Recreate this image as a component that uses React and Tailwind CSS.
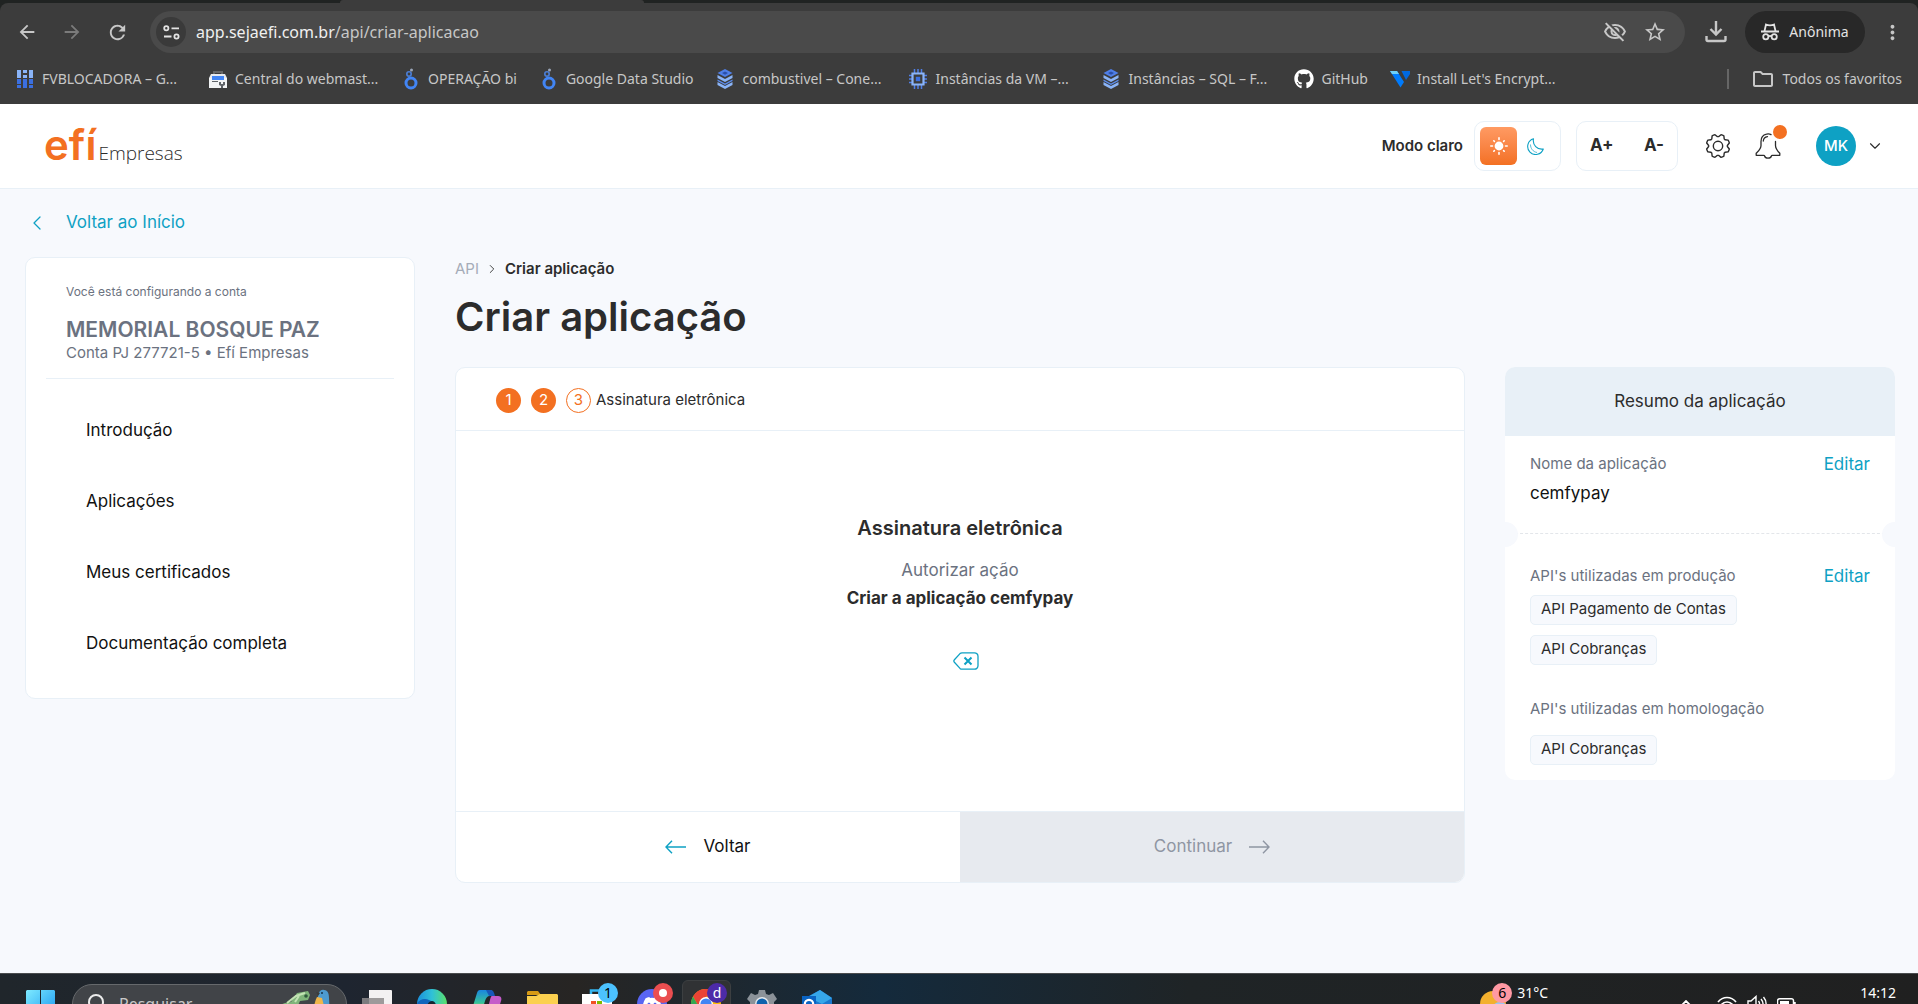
import { useState } from "react";
import {
  MdArrowBack,
  MdArrowForward,
  MdRefresh,
  MdStarBorder,
  MdMoreVert,
  MdOutlineFolder,
  MdOutlineVisibilityOff,
} from "react-icons/md";
import { FaGithub, FaDiscord } from "react-icons/fa";
import { PiGearLight } from "react-icons/pi";
import { ChevronDown, ChevronLeft, ChevronRight } from "lucide-react";

/* ---------- Bookmark icons ---------- */

const CloudIcon = () => (
  <svg width="16" height="20" viewBox="0 0 16 20">
    <path fill="#8ab4f8" d="M0 1h4v8H0zM6 1h4v3H6zM12 1h4v8h-4zM6 6h4v3H6z" />
    <path fill="#3b6fe0" d="M0 10h4v5H0zM0 16h4v3H0zM6 10h4v9H6zM12 10h4v5h-4zM12 16h4v3h-4z" />
  </svg>
);

const WebmasterIcon = () => (
  <svg width="18" height="18" viewBox="0 0 18 18">
    <path d="M5 4V2h8v2" fill="none" stroke="#666" strokeWidth="2" />
    <path d="M2 4h14l2 4H0z" fill="#e8eaed" />
    <path d="M3 6h12v4H3z" fill="#4285f4" />
    <path d="M0 8h3v2h12V8h3v10H0z" fill="#f1f3f4" />
    <path d="M3 11h6v1H3zM10 12h2v2h2v-2h2v3l-2 1v2h-2v-2l-2-1z" fill="#5f6368" />
  </svg>
);

const LookerIcon = () => (
  <svg width="14" height="22" viewBox="0 0 14 22">
    <circle cx="7" cy="15" r="5" fill="none" stroke="#4285f4" strokeWidth="3" />
    <circle cx="5" cy="6" r="2.2" fill="none" stroke="#4b7fd8" strokeWidth="1.6" />
    <circle cx="7.500" cy="2" r="1.500" fill="#9aa5b8" />
  </svg>
);

const SqlIcon = () => (
  <svg width="16" height="20" viewBox="0 0 16 20">
    <path d="M8 0l7.500 4L8 8 .5 4z" fill="#4f7fe8" />
    <path d="M8 2.500l3 1.500-3 1.700L5 4z" fill="#2b4fa8" />
    <path d="M.5 6L8 10l7.500-4v3L8 13 .5 9z" fill="#8ab4f8" />
    <path d="M.5 10.500L8 14.500l7.500-4v1.500L8 16 .5 12z" fill="#5b8df0" />
    <path d="M.5 13L8 17l7.500-4v3L8 20 .5 16z" fill="#8ab4f8" />
  </svg>
);

const ChipIcon = () => (
  <svg width="18" height="20" viewBox="0 0 18 20" fill="none">
    <path d="M5.500 0v4M9 0v4M12.500 0v4M5.500 16v4M9 16v4M12.500 16v4M0 6.500h3M0 10h3M0 13.500h3M15 6.500h3M15 10h3M15 13.500h3" stroke="#4f7fe8" strokeWidth="1.500" />
    <path d="M3.500 4.500h11v11h-11z" stroke="#8ab4f8" strokeWidth="2.200" />
    <path d="M6.800 7.800h4.400v4.400H6.800z" fill="#3b6fe0" />
  </svg>
);

const VultrIcon = () => (
  <svg width="20" height="18" viewBox="0 0 20 18">
    <path d="M0 1h7l7 11-3.500 5.500z" fill="#007bfc" />
    <path d="M0 1h7l2 3H2z" fill="#6fd0f7" />
    <path d="M11.500 1H20v3l-4 6z" fill="#0069e0" />
  </svg>
);

const bookmarks = [
  { name: "FVBLOCADORA – G...", Icon: CloudIcon, wide: true },
  { name: "Central do webmast...", Icon: WebmasterIcon, wide: true },
  { name: "OPERAÇÃO bi", Icon: LookerIcon },
  { name: "Google Data Studio", Icon: LookerIcon },
  { name: "combustivel – Cone...", Icon: SqlIcon, wide: true },
  { name: "Instâncias da VM –...", Icon: ChipIcon, wide: true },
  { name: "Instâncias – SQL – F...", Icon: SqlIcon, wide: true },
  { name: "GitHub", Icon: () => <FaGithub size={20} color="#fff" /> },
  { name: "Install Let's Encrypt...", Icon: VultrIcon },
];

/* ---------- Browser ---------- */

function BrowserBar() {
  return (
    <div className="shrink-0 bg-[#202322] text-[#c7c7c7] font-['Noto_Sans',sans-serif]">
      <div className="flex h-[3px]">
        <div className="w-[340px]" />
        <div className="w-[304px] rounded-t-sm bg-[#3c3c3c]" />
      </div>
      <div className="rounded-t-lg bg-[#3c3c3c] pt-2">
        <div className="flex h-[42px] items-center pr-3.5">
          <button aria-label="Voltar página" className="ml-4"><MdArrowBack size={22} /></button>
          <button aria-label="Avançar página" className="ml-[23px] text-[#7b7b7b]"><MdArrowForward size={22} /></button>
          <button aria-label="Recarregar" className="ml-[23px]"><MdRefresh size={23} /></button>
          <div className="ml-[21px] flex h-full flex-1 items-center rounded-full bg-[#4a4a4a] pr-[18px] pl-1.5">
            <button aria-label="Informações do site" className="flex size-[30px] items-center justify-center rounded-full bg-[#3a3a3a] text-[#e3e3e3]">
              <svg width="17" height="15" viewBox="0 0 17 15" fill="none" stroke="currentColor" strokeWidth="1.800">
                <circle cx="3.300" cy="3.300" r="2.100" />
                <path d="M8.500 3.300H16M1 11.500h7.500" />
                <circle cx="13.500" cy="11.500" r="2.100" />
              </svg>
            </button>
            <p className="ml-2.5 flex-1">
              <span className="text-[#f0f0f0]">app.sejaefi.com.br</span>/api/criar-aplicacao
            </p>
            <button aria-label="Cookies bloqueados"><MdOutlineVisibilityOff size={24} /></button>
            <button aria-label="Favoritar" className="ml-4"><MdStarBorder size={24} /></button>
          </div>
          <button aria-label="Downloads" className="ml-5">
            <svg width="22" height="22" viewBox="0 0 22 22" fill="none" stroke="currentColor" strokeWidth="2.400">
              <path d="M11 0v13M5.500 8l5.500 5.500L16.500 8M1.500 15v3.500a1.500 1.500 0 0 0 1.500 1.500h16a1.500 1.500 0 0 0 1.500-1.500V15" />
            </svg>
          </button>
          <button className="ml-[18px] flex h-full w-[120px] items-center justify-center gap-2.5 rounded-full bg-[#282828] text-sm text-[#e3e3e3]">
            <svg width="18" height="18" viewBox="0 0 18 18" fill="none" stroke="currentColor" strokeWidth="1.800">
              <path d="M0 8.500h18M3.500 8L5 1.500c2 .8 6 .8 8 0L14.500 8" />
              <circle cx="4.800" cy="13.800" r="2.600" />
              <circle cx="13.200" cy="13.800" r="2.600" />
              <path d="M7.400 13.500c1-.7 2.200-.7 3.200 0" />
            </svg>
            Anônima
          </button>
          <button aria-label="Mais opções" className="ml-4"><MdMoreVert size={23} /></button>
        </div>

        <nav className="flex h-[51px] items-center gap-[22px] pr-4 pl-[15px] text-sm">
          {bookmarks.map(({ name, Icon, wide }) => (
            <a key={name} href="#" className={`flex shrink-0 items-center gap-[7px] whitespace-nowrap ${wide ? "w-[171px]" : ""}`}>
              <span className="flex w-5 justify-center"><Icon /></span>
              {name}
            </a>
          ))}
          <span className="ml-auto h-5 w-0.5 bg-[#666]" />
          <a href="#" className="flex items-center gap-2 whitespace-nowrap">
            <MdOutlineFolder size={24} />
            Todos os favoritos
          </a>
        </nav>
      </div>
    </div>
  );
}

/* ---------- Page ---------- */

function Header() {
  const [zoom, setZoom] = useState(0);

  return (
    <header className="flex h-[85px] shrink-0 items-center border-b border-[#e8f0f7] bg-white pr-[34px] pl-11 text-[#2c2c2c]">
      <a href="#" className="flex items-baseline gap-0.5">
        <span className="text-[42px] leading-none font-semibold text-[#f37021]">efí</span>
        <span className="font-['Open_Sans',sans-serif] text-[19px] font-light">Empresas</span>
      </a>

      <span className="ml-auto text-[15px] font-semibold">Modo claro</span>
      <div className="ml-[11px] flex h-[50px] w-[87px] items-center gap-2.5 rounded-[10px] border border-[#e8f0f7] px-[5px]">
        <button aria-label="Modo claro" className="flex h-[38px] w-[37px] items-center justify-center rounded-md bg-linear-to-b from-[#ff9a62] to-[#f37021]">
          <svg width="18" height="18" viewBox="0 0 18 18" stroke="#fff" strokeWidth="1.600" strokeLinecap="round">
            <circle cx="9" cy="9" r="3.600" fill="#fff" />
            <path d="M9 .8v1.700M9 15.500v1.700M.8 9h1.700M15.500 9h1.700M3.800 3.800l.6.600M13.600 13.600l.6.600M3.800 14.200l.6-.6M13.600 4.400l.6-.6" />
          </svg>
        </button>
        <button aria-label="Modo escuro">
          <svg width="17" height="17" viewBox="0 0 17 17" fill="none" stroke="#0ea1c4" strokeWidth="1.100" strokeLinejoin="round">
            <path d="M6.500.8A8 8 0 1 0 16.300 11 8.500 8.500 0 0 1 6.500.8z" />
            <path d="M3.500 6.500c0 4 2.500 7.300 6.500 8" strokeWidth=".7" />
          </svg>
        </button>
      </div>

      <div className="ml-[15px] flex h-[50px] w-[102px] items-center justify-between rounded-[10px] border border-[#e8f0f7] px-[13px] text-[17px] font-bold">
        <button onClick={() => setZoom(zoom + 1)}>A+</button>
        <button onClick={() => setZoom(zoom - 1)}>A-</button>
      </div>

      <button aria-label="Configurações" className="ml-[25px]"><PiGearLight size={30} /></button>
      <button aria-label="Notificações" className="relative ml-[22px]">
        <svg width="26" height="26" viewBox="0 0 26 26" fill="none" stroke="currentColor" strokeWidth="1.300" strokeLinecap="round" strokeLinejoin="round">
          <path d="M16 1.600C14.500.7 13 .7 11.500 1.200 8 2 6 5 6 8.500v4C6 16 3.500 18 1.200 20.300v2h7.600c.4 0 .7.300.8.700.4 1.500 1.500 2.200 3.400 2.200s3-.7 3.400-2.200c.1-.4.400-.7.800-.7h7.600v-2C22.500 18 20.500 16 20.500 12.500V8.500" />
          <path d="M8.300 8c.2-2.500 1.700-4 4.200-4.300" />
        </svg>
        <span className="absolute -top-2 -right-1.5 size-3.5 rounded-full bg-[#f37021]" />
      </button>

      <button className="ml-[35px] flex items-center gap-2.5">
        <span className="flex size-10 items-center justify-center rounded-full bg-[#0ea1c4] text-[15px] font-medium text-white">MK</span>
        <ChevronDown size={18} strokeWidth={1.5} />
      </button>
    </header>
  );
}

const menu = ["Introdução", "Aplicações", "Meus certificados", "Documentação completa"];

function Sidebar() {
  return (
    <aside className="w-[390px] shrink-0">
      <a href="#" className="flex h-[68px] items-center gap-[17px] text-[17px] text-[#0ea1c4]">
        <ChevronLeft size={24} strokeWidth={1.3} />
        Voltar ao Início
      </a>
      <div className="rounded-[10px] border border-[#e8f0f7] bg-white px-5 pb-[19px]">
        <div className="border-b border-[#e8f0f7] px-5 pt-6 pb-3.5 text-[#6b7280]">
          <p className="text-xs leading-5">Você está configurando a conta</p>
          <p className="mt-4 text-[21px] leading-6 font-semibold">MEMORIAL BOSQUE PAZ</p>
          <p className="text-[15px] leading-[22px]">Conta PJ 277721-5 • Efí Empresas</p>
        </div>
        <nav className="mt-4">
          {menu.map((item) => (
            <a key={item} href="#" className="flex h-[71px] items-center px-10 text-[17px] text-[#111]">
              {item}
            </a>
          ))}
        </nav>
      </div>
    </aside>
  );
}

function SignatureCard() {
  return (
    <section className="overflow-hidden rounded-[10px] border border-[#e8f0f7] bg-white">
      <ol className="flex h-[63px] items-center gap-2.5 border-b border-[#e8f0f7] px-10 pt-0.5 text-[15px]">
        <li className="flex size-[25px] items-center justify-center rounded-full bg-[#f37021] text-white">1</li>
        <li className="flex size-[25px] items-center justify-center rounded-full bg-[#f37021] text-white">2</li>
        <li className="flex items-center gap-[5px]">
          <span className="flex size-[25px] items-center justify-center rounded-full border border-[#f37021] text-[#f37021]">3</span>
          Assinatura eletrônica
        </li>
      </ol>

      <div className="flex h-[380px] flex-col items-center pt-[83px]">
        <h2 className="text-xl leading-7 font-semibold">Assinatura eletrônica</h2>
        <p className="mt-3.5 text-[17px] leading-7 text-[#6b7280]">Autorizar ação</p>
        <p className="text-[17px] leading-7 font-bold">Criar a aplicação cemfypay</p>
        <button aria-label="Apagar" className="mt-10 ml-3">
          <svg width="26" height="18" viewBox="0 0 26 18" fill="none" stroke="#0ea1c4" strokeWidth="1.300" strokeLinejoin="round">
            <path d="M9 .8h12.500a3.500 3.500 0 0 1 3.500 3.500v9.400a3.500 3.500 0 0 1-3.500 3.500H9a3 3 0 0 1-2-.8L1.400 10.300a1.800 1.800 0 0 1 0-2.600L7 1.600A3 3 0 0 1 9 .8z" />
            <path d="M11.500 5.500l7 7M18.500 5.500l-7 7" strokeWidth="2" />
          </svg>
        </button>
      </div>

      <div className="flex h-[71px] border-t border-[#e8f0f7] text-[17px]">
        <button className="flex flex-1 items-center justify-center gap-[17px] text-[#111]">
          <svg width="21" height="14" viewBox="0 0 21 14" fill="none" stroke="#0ea1c4" strokeWidth="1.400">
            <path d="M21 7H1M7 .7L1 7l6 6.300" />
          </svg>
          Voltar
        </button>
        <button disabled className="flex flex-1 items-center justify-center gap-[17px] bg-[#e7eaef] text-[#8f96a3]">
          Continuar
          <svg width="21" height="14" viewBox="0 0 21 14" fill="none" stroke="currentColor" strokeWidth="1.400">
            <path d="M0 7h20M14 .7L20 7l-6 6.300" />
          </svg>
        </button>
      </div>
    </section>
  );
}

function ApiTag({ children }) {
  return (
    <li className="flex h-[30px] items-center rounded-[5px] border border-[#e8f0f7] bg-[#f7f9fd] px-2.5 pb-0.5 text-[15px] text-[#2c2c2c]">
      {children}
    </li>
  );
}

function Summary() {
  return (
    <aside className="mt-[178px] w-[390px] shrink-0 self-start overflow-hidden rounded-[10px] bg-white text-[15px] text-[#6b7280]">
      <h2 className="flex h-[69px] items-center justify-center bg-[#e8f0f7] text-[17px] text-[#2c2c2c]">Resumo da aplicação</h2>

      <div className="flex justify-between px-[25px] pt-4 pb-7">
        <div>
          <p className="leading-6">Nome da aplicação</p>
          <p className="mt-[5px] text-[17px] leading-6 text-[#111]">cemfypay</p>
        </div>
        <a href="#" className="text-[17px] leading-6 text-[#0ea1c4]">Editar</a>
      </div>

      {/* ticket notch */}
      <div className="relative border-t border-dashed border-[#e3e6ea]">
        <span className="absolute -top-3 -left-3 size-[25px] rounded-full bg-[#f7f9fd]" />
        <span className="absolute -top-3 -right-3 size-[25px] rounded-full bg-[#f7f9fd]" />
      </div>

      <div className="px-[25px] pt-7 pb-[15px]">
        <div className="flex justify-between">
          <p className="leading-7">API's utilizadas em produção</p>
          <a href="#" className="text-[17px] leading-7 text-[#0ea1c4]">Editar</a>
        </div>
        <ul className="mt-[5px] flex flex-col items-start gap-2.5">
          <ApiTag>API Pagamento de Contas</ApiTag>
          <ApiTag>API Cobranças</ApiTag>
        </ul>
        <p className="mt-8 leading-6">API's utilizadas em homologação</p>
        <ul className="mt-3.5 flex">
          <ApiTag>API Cobranças</ApiTag>
        </ul>
      </div>
    </aside>
  );
}

/* ---------- Windows taskbar ---------- */

function Badge({ className, children }) {
  return (
    <span className={`absolute flex size-5 items-center justify-center rounded-full text-sm leading-none ${className}`}>
      {children}
    </span>
  );
}

function Taskbar() {
  return (
    <footer className="h-[31px] shrink-0 overflow-hidden border-t border-[#4a4c4e] bg-[linear-gradient(90deg,#20262b_0%,#1e2530_18%,#272523_30%,#142a3c_46%,#1f2426_62%,#202020_100%)] font-['Noto_Sans',sans-serif] text-white">
      <div className="flex h-15 items-center">
        <button aria-label="Iniciar" className="ml-[26px]">
          <svg width="29" height="29" viewBox="0 0 29 29">
            <defs>
              <linearGradient id="win" x1="0" y1="0" x2="1" y2="1">
                <stop offset="0" stopColor="#7eeaff" />
                <stop offset="1" stopColor="#1595f0" />
              </linearGradient>
            </defs>
            <path d="M1 0h13v14H0V1zM15 0h13l1 1v13H15zM0 15h14v14H0zM15 15h14v14H15z" fill="url(#win)" />
          </svg>
        </button>

        <label className="ml-[17px] flex h-10 w-[275px] items-center rounded-full border border-[#66696c] bg-[#414448] pl-3.5">
          <svg width="20" height="20" viewBox="0 0 20 20" fill="none" stroke="#ececec" strokeWidth="2">
            <circle cx="9" cy="8" r="7" />
            <path d="M14 13l5 6" />
          </svg>
          <input placeholder="Pesquisar" className="ml-3 w-[158px] bg-transparent text-base placeholder:text-[#c8c8c8] focus:outline-none" />
          <svg width="56" height="32" viewBox="0 0 56 32">
            <path d="M0 18l8-3 6-1 6-9 11-2 2 4-2 5-8 1-4 9-6 6H4z" fill="#7fb57a" />
            <path d="M10 15l9-7 9-3M18 14l4-6" stroke="#c3e3b4" strokeWidth="2" fill="none" />
            <circle cx="29" cy="8" r="1.800" fill="#2f5a3c" />
            <path d="M41 9c0-5 3-8 6-7 4 0 5 4 5 8l1 20H38z" fill="#4d9bd0" />
            <path d="M40 9l5 1 2 8-1 13h-9c-1-8 0-16 3-22z" fill="#f0b64a" />
            <path d="M39 4l4 1-2 3z" fill="#3b3b3b" />
            <circle cx="45" cy="5" r="1" fill="#16324a" />
          </svg>
        </label>

        <button aria-label="Visão de tarefas" className="ml-[15px]">
          <svg width="30" height="28" viewBox="0 0 30 28">
            <path d="M7 0h22a1 1 0 0 1 1 1v19H7z" fill="#f3f1f2" />
            <path d="M0 8h22v20H0z" fill="#8d8b8c" fillOpacity=".85" />
          </svg>
        </button>

        <button aria-label="Edge" className="ml-[25px]">
          <svg width="30" height="30" viewBox="0 0 30 30">
            <defs>
              <linearGradient id="edge" x1="0" y1="0" x2="1" y2="0">
                <stop offset="0" stopColor="#1b8fdc" />
                <stop offset=".5" stopColor="#2fc1d8" />
                <stop offset="1" stopColor="#5be06a" />
              </linearGradient>
            </defs>
            <circle cx="15" cy="15" r="15" fill="url(#edge)" />
            <path d="M0 15c2-5 8-6 12-4 3 1 5 3 6 6 1 4-6 5-4 12C6 29 0 23 0 15z" fill="#1265bd" />
            <path d="M10 18c0-4 3-6 5-6s4 2 4 5-3 6-3 6-6-1-6-5z" fill="#15252f" />
          </svg>
        </button>

        <button aria-label="Copilot" className="ml-[26px]">
          <svg width="29" height="28" viewBox="0 0 29 28">
            <defs>
              <linearGradient id="cop" x1="0" y1="0" x2="0" y2="1">
                <stop offset="0" stopColor="#1a86e0" />
                <stop offset=".6" stopColor="#37c29b" />
                <stop offset="1" stopColor="#e8d24a" />
              </linearGradient>
            </defs>
            <path d="M7 0h10c3 0 3 3 4 6h-4c-3 0-4 2-5 5l-3 10H3c-3 0-4-2-3-5L4 3c.5-2 1.500-3 3-3z" fill="url(#cop)" />
            <path d="M13 0h5c2 0 3 2 4 6h-6z" fill="#1857b8" />
            <path d="M19 6h6c3 0 4 2 3 5l-4 13c-1 3-2 4-4 4H9c3 0 4-3 5-6l3-12c.5-2 1-4 2-4z" fill="#c65cc9" />
          </svg>
        </button>

        <button aria-label="Explorador de Arquivos" className="ml-[25px]">
          <svg width="31" height="27" viewBox="0 0 31 27">
            <path d="M1 0h10l3 4H0V1z" fill="#d79a14" />
            <path d="M0 5h9l4-2h17l1 1v23H0z" fill="#fbd04f" />
          </svg>
        </button>

        <button aria-label="Microsoft Store" className="relative ml-6">
          <svg width="30" height="30" viewBox="0 0 30 30">
            <path d="M9 6V1.500h12V6" fill="none" stroke="#35b5ef" strokeWidth="2.500" />
            <path d="M0 5h30v20a4 4 0 0 1-4 4H4a4 4 0 0 1-4-4z" fill="#fff" />
            <path d="M9 12h5v5H9z" fill="#f25022" />
            <path d="M15 12h5v5h-5z" fill="#7fba00" />
          </svg>
          <Badge className="-top-1.5 -right-1.5 bg-[#4cc2ff] text-black">1</Badge>
        </button>

        <button aria-label="Discord" className="relative ml-[25px]">
          <span className="flex size-[30px] items-center justify-center rounded-full bg-[#5865f2]"><FaDiscord size={20} /></span>
          <Badge className="-top-1.5 -right-1.5 bg-[#ea4e50]"><span className="size-2 rounded-full bg-white" /></Badge>
        </button>

        <button aria-label="Chrome" className="ml-[15px] flex h-12 w-[49px] items-center rounded-md border border-[#3c3f41] bg-[#303234] pl-2">
          <span className="relative">
            <svg width="30" height="30" viewBox="0 0 30 30">
              <circle cx="15" cy="15" r="15" fill="#fbbc05" />
              <path d="M2 7.500A15 15 0 0 1 28 7.500H15L8.500 19z" fill="#ea4335" />
              <path d="M2 7.500L8.500 19 15 22l-2 8A15 15 0 0 1 2 7.500z" fill="#34a853" />
              <circle cx="15" cy="15" r="7" fill="#fff" />
              <circle cx="15" cy="15" r="5.600" fill="#4285f4" />
            </svg>
            <Badge className="-top-1.5 -right-1.5 bg-[#4d2ba8]">d</Badge>
          </span>
        </button>

        <button aria-label="Configurações do Windows" className="ml-4">
          <svg width="30" height="30" viewBox="0 0 30 30">
            <path d="M12 1h6l1 4 3 1 4-2 4 6-3 3v4l3 3-4 6-4-2-3 1-1 4h-6l-1-4-3-1-4 2-4-6 3-3v-4l-3-3 4-6 4 2 3-1z" fill="#8b9299" />
            <circle cx="15" cy="15" r="7" fill="#e4e7ea" />
            <circle cx="15" cy="15" r="5.500" fill="#0f62ad" />
          </svg>
        </button>

        <button aria-label="Outlook" className="ml-[25px]">
          <svg width="30" height="28" viewBox="0 0 30 28">
            <path d="M5 7L18 0l12 8v20H5z" fill="#1a78cf" />
            <path d="M18 0l12 8-10 6L6 7z" fill="#36a7ea" />
            <path d="M0 6h14v18H0z" fill="#0a63c2" />
            <circle cx="7" cy="14" r="4.200" fill="none" stroke="#fff" strokeWidth="2.200" />
          </svg>
        </button>

        <button className="ml-auto flex items-center gap-[9px] text-sm">
          <span className="relative">
            <svg width="28" height="26" viewBox="0 0 28 26">
              <circle cx="13" cy="13" r="13" fill="#f3b02e" />
              <ellipse cx="20" cy="18" rx="8" ry="7" fill="#9cc4f2" />
            </svg>
            <Badge className="-top-2 -right-1 bg-[#ff99a4] text-black">6</Badge>
          </span>
          <span className="pb-[22px]">31°C</span>
        </button>

        <button aria-label="Mostrar ícones ocultos" className="ml-[131px]">
          <svg width="14" height="8" viewBox="0 0 14 8" fill="none" stroke="#fff" strokeWidth="1.800">
            <path d="M1 7l6-6 6 6" />
          </svg>
        </button>
        <button aria-label="Rede, som e bateria" className="ml-6 flex items-center gap-2.5">
          <svg width="20" height="16" viewBox="0 0 20 16" fill="none" stroke="#fff" strokeWidth="1.700">
            <path d="M1 6c5-6 13-6 18 0M4 9c3.500-4 8.500-4 12 0M7 12c2-2 4-2 6 0" />
            <circle cx="10" cy="14" r="1" fill="#fff" />
          </svg>
          <svg width="20" height="18" viewBox="0 0 20 18" fill="none" stroke="#fff" strokeWidth="1.400">
            <path d="M1 6h3l5-4.500v15L4 12H1zM11.500 6c1.500 2 1.500 4 0 6M14 4c2.500 3 2.500 7 0 10M16.500 2c3.500 4 3.500 10 0 14" />
          </svg>
          <svg width="20" height="13" viewBox="0 0 20 13">
            <path d="M2.500.8h12a2 2 0 0 1 2 2v7.400a2 2 0 0 1-2 2h-12a2 2 0 0 1-2-2V2.800a2 2 0 0 1 2-2zM18 4v5" fill="none" stroke="#fff" strokeWidth="1.500" />
            <path d="M3 3h9v7H3z" fill="#fff" />
          </svg>
        </button>
        <time className="mr-[22px] ml-[63px] pb-[22px] text-sm">14:12</time>
      </div>
    </footer>
  );
}

export default function App() {
  return (
    <div className="flex h-screen flex-col overflow-hidden bg-[#f7f9fd] font-[Inter,sans-serif] text-[#2c2c2c]">
      <BrowserBar />
      <Header />
      <div className="flex min-h-0 flex-1 gap-10 pr-[23px] pl-[25px]">
        <Sidebar />
        <main className="min-w-0 flex-1 pt-[68px]">
          <nav className="flex h-6 items-center gap-1.5 text-[15px]">
            <a href="#" className="text-[#a5acb8]">API</a>
            <ChevronRight size={14} strokeWidth={1.5} />
            <span className="font-semibold">Criar aplicação</span>
          </nav>
          <h1 className="mt-3 mb-[26px] text-[40px] leading-12 font-semibold">Criar aplicação</h1>
          <SignatureCard />
        </main>
        <Summary />
      </div>
      <Taskbar />
    </div>
  );
}
